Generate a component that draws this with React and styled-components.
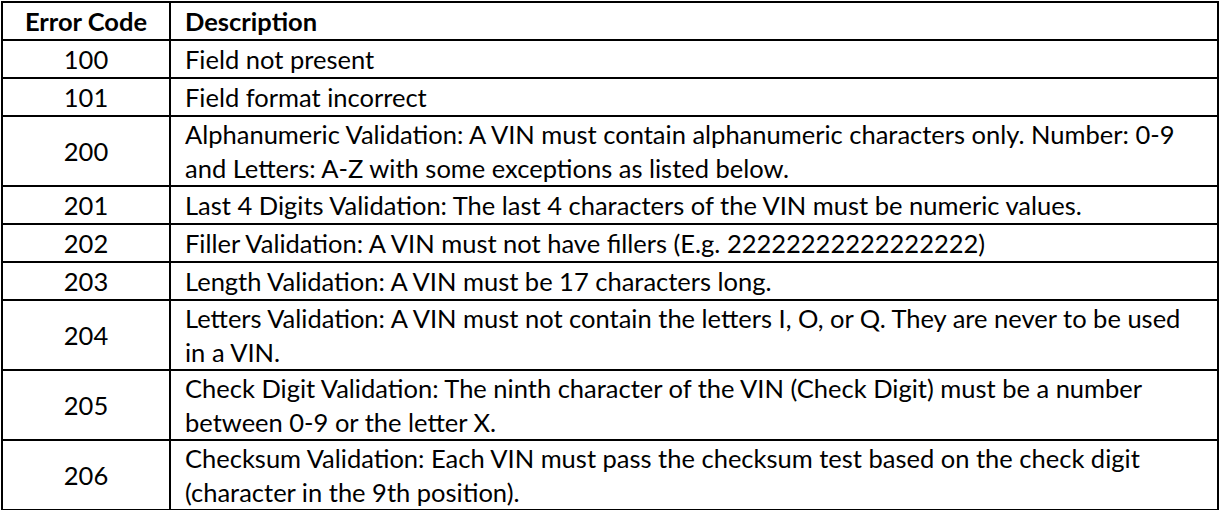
import React from "react";
import styled, { createGlobalStyle } from "styled-components";

const GlobalStyle = createGlobalStyle`
  html, body {
    margin: 0;
    padding: 0;
    background: #ffffff;
  }
  body {
    font-family: Lato, "Open Sans", sans-serif;
    color: #000000;
  }
`;

const rows = [
  { code: "100", lines: ["Field not present"] },
  { code: "101", lines: ["Field format incorrect"] },
  {
    code: "200",
    lines: [
      "Alphanumeric Validation: A VIN must contain alphanumeric characters only. Number: 0-9",
      "and Letters: A-Z with some exceptions as listed below.",
    ],
  },
  {
    code: "201",
    lines: ["Last 4 Digits Validation: The last 4 characters of the VIN must be numeric values."],
  },
  {
    code: "202",
    lines: ["Filler Validation: A VIN must not have fillers (E.g. 22222222222222222)"],
  },
  { code: "203", lines: ["Length Validation: A VIN must be 17 characters long."] },
  {
    code: "204",
    lines: [
      "Letters Validation: A VIN must not contain the letters I, O, or Q. They are never to be used",
      "in a VIN.",
    ],
  },
  {
    code: "205",
    lines: [
      "Check Digit Validation: The ninth character of the VIN (Check Digit) must be a number",
      "between 0-9 or the letter X.",
    ],
  },
  {
    code: "206",
    lines: [
      "Checksum Validation: Each VIN must pass the checksum test based on the check digit",
      "(character in the 9th position).",
    ],
  },
];

const Page = styled.div`
  padding: 1px 0 0 1px;
`;

const Table = styled.table`
  width: 1218px;
  border-collapse: collapse;
  table-layout: fixed;
  font-family: Lato, "Open Sans", sans-serif;
  font-size: 25.5px;
`;

const Row = styled.tr`
  height: ${(p) => (p.$double ? 68.5 : 38)}px;
`;

const HeadCell = styled.th`
  border: 2px solid #000;
  padding: ${(p) => (p.$center ? "0" : "0 14px")};
  font-weight: 700;
  line-height: 34px;
  text-align: ${(p) => (p.$center ? "center" : "left")};
  width: ${(p) => (p.$width ? `${p.$width}px` : "auto")};
`;

const CodeCell = styled.td`
  border: 2px solid #000;
  padding: 0;
  text-align: center;
  line-height: 34px;
  vertical-align: middle;
`;

const DescCell = styled.td`
  border: 2px solid #000;
  padding: 0 14px;
  line-height: 34px;
  vertical-align: middle;
  white-space: nowrap;
`;

const Line = styled.div`
  display: block;
`;

export default function App() {
  return (
    <Page>
      <GlobalStyle />
      <Table>
        <thead>
          <Row>
            <HeadCell $center $width={166}>
              Error Code
            </HeadCell>
            <HeadCell>Description</HeadCell>
          </Row>
        </thead>
        <tbody>
          {rows.map((r) => (
            <Row key={r.code} $double={r.lines.length > 1}>
              <CodeCell>{r.code}</CodeCell>
              <DescCell>
                {r.lines.map((l, i) => (
                  <Line key={i}>{l}</Line>
                ))}
              </DescCell>
            </Row>
          ))}
        </tbody>
      </Table>
    </Page>
  );
}
